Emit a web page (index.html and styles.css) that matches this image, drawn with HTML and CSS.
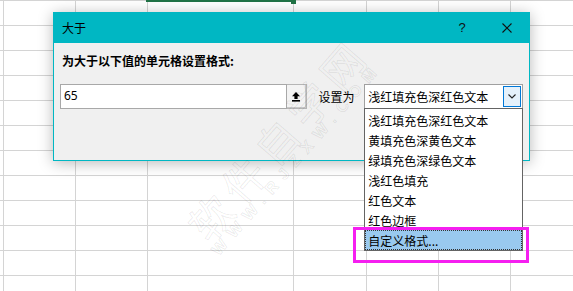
FILE: index.html
```html
<!DOCTYPE html>
<html lang="zh-CN">
<head>
<meta charset="utf-8">
<title>大于</title>
<link rel="stylesheet" href="styles.css">
</head>
<body>
<div class="sheet">
  <div class="col c0"></div>
  <div class="col c1"></div>
  <div class="col c2"></div>
  <div class="col c3"></div>
  <div class="col c4"></div>
  <div class="col c5"></div>
  <div class="col c6"></div>
  <div class="col c7"></div>
</div>
<div class="sel-edge"></div>
<div class="sel-handle"></div>

<div class="dialog">
  <div class="titlebar">
    <span class="title">大于</span>
    <span class="help">?</span>
    <svg class="close" width="10" height="10" viewBox="0 0 10 10"><path d="M0.5 0.5 L9.5 9.5 M9.5 0.5 L0.5 9.5" stroke="#111" stroke-width="1.1" fill="none"/></svg>
  </div>
  <div class="body">
    <div class="prompt">为大于以下值的单元格设置格式:</div>
    <div class="row">
      <div class="input">65</div>
      <div class="refbtn">
        <svg width="8" height="10" viewBox="0 0 8 10"><path d="M4 0 L8 4.2 L5.6 4.2 L5.6 7 L2.4 7 L2.4 4.2 L0 4.2 Z" fill="#000"/><rect x="0" y="8" width="8" height="1.6" fill="#000"/></svg>
      </div>
      <div class="setlabel">设置为</div>
      <div class="combo">
        <span class="combo-text">浅红填充色深红色文本</span>
        <span class="ddbtn"><svg width="8" height="5" viewBox="0 0 8 5"><path d="M0.5 0.5 L4 4 L7.5 0.5" stroke="#222" stroke-width="1.1" fill="none"/></svg></span>
        <ul class="list">
          <li>浅红填充色深红色文本</li>
          <li>黄填充色深黄色文本</li>
          <li>绿填充色深绿色文本</li>
          <li>浅红色填充</li>
          <li>红色文本</li>
          <li>红色边框</li>
          <li class="selected">自定义格式...</li>
        </ul>
      </div>
    </div>
  </div>
</div>

<div class="highlight"></div>
<div class="wm wm1">软件自学网</div>
<div class="wm wm2">WWW.RJZXW.COM</div>
</body>
</html>
```

FILE: styles.css
```css
* { box-sizing: border-box; }
html, body {
  margin: 0;
  padding: 0;
  width: 573px;
  height: 291px;
  overflow: hidden;
  background: #fff;
  font-family: "Noto Sans CJK SC", "Noto Sans", sans-serif;
  color: #000;
}
.sheet {
  display: flex;
  height: 291px;
  background: repeating-linear-gradient(to bottom, #d4d4d4 0 1px, transparent 1px 25px);
}
.col {
  flex: none;
  height: 100%;
  border-right: 1px solid #d4d4d4;
  box-sizing: content-box;
}
.c0 { width: 3px; }
.c1 { width: 71px; }
.c2 { width: 71px; }
.c3 { width: 145px; }
.c4 { width: 72px; }
.c5 { width: 71px; }
.c6 { width: 71px; }
.c7 { flex: 1; border-right: none; }

.sel-edge {
  position: absolute;
  left: 146px;
  top: 0;
  width: 145px;
  height: 2px;
  background: #217346;
}
.sel-handle {
  position: absolute;
  left: 291px;
  top: 0;
  width: 5px;
  height: 4px;
  background: #217346;
}

.dialog {
  position: absolute;
  left: 53px;
  top: 12px;
  width: 477px;
  height: 149px;
  background: #f0f0f0;
  border: 1px solid #00b7c3;
  box-shadow: 0 2px 14px rgba(0, 0, 0, 0.28);
  display: flex;
  flex-direction: column;
}
.titlebar {
  height: 30px;
  flex: none;
  background: #00b7c3;
  display: flex;
  align-items: center;
  padding-left: 8px;
  padding-right: 17px;
}
.title {
  font-size: 12px;
  line-height: 16px;
  color: #000;
}
.help {
  margin-left: auto;
  width: 12px;
  text-align: center;
  font-family: "Liberation Sans", sans-serif;
  font-size: 13px;
  line-height: 16px;
  color: #111;
}
.close {
  display: block;
  margin-left: 34px;
}
.body {
  flex: 1;
  padding: 10px 6px 0 6px;
}
.prompt {
  margin-left: 2px;
  font-size: 12px;
  font-weight: bold;
  line-height: 16px;
  height: 16px;
}
.row {
  margin-top: 15px;
  display: flex;
  align-items: center;
  height: 25px;
}
.input {
  width: 227px;
  height: 25px;
  background: #fff;
  border: 1px solid #a8a8a8;
  font-family: "Noto Sans", sans-serif;
  font-size: 12px;
  line-height: 22px;
  padding-left: 3px;
}
.refbtn {
  width: 21px;
  height: 25px;
  border: 1px solid #b5b5b5;
  border-left: none;
  box-shadow: inset -1px -1px 0 #c8c8c8;
  background: #f3f3f3;
  display: flex;
  align-items: center;
  justify-content: center;
}
.setlabel {
  margin-left: 11px;
  font-size: 12px;
  line-height: 16px;
  width: 46px;
}
.combo {
  position: relative;
  width: 159px;
  height: 25px;
  background: #fff;
  border: 1px solid #a0a0a0;
  display: flex;
  align-items: center;
  padding-left: 3px;
}
.combo-text {
  font-size: 12px;
  line-height: 16px;
  flex: 1;
}
.ddbtn {
  width: 18px;
  height: 21px;
  margin-right: 1px;
  background: #e5f1fb;
  border: 1px solid #0078d7;
  display: flex;
  align-items: center;
  justify-content: center;
}
.list {
  position: absolute;
  left: -1px;
  top: 23px;
  width: 159px;
  margin: 0;
  padding: 1px 0 0 0;
  list-style: none;
  background: #fff;
  border: 1px solid #646464;
  z-index: 5;
}
.list li {
  height: 20px;
  font-size: 12px;
  line-height: 16px;
  padding: 3px 0 0 3px;
  white-space: nowrap;
}
.list li.selected {
  background: #99c9ef;
  outline: 1px dotted #333;
  outline-offset: -1px;
}

.highlight {
  position: absolute;
  left: 353px;
  top: 227px;
  width: 176px;
  height: 36px;
  border: 3px solid #f51ff0;
  z-index: 6;
}

.wm {
  position: absolute;
  z-index: 7;
  pointer-events: none;
  white-space: nowrap;
  text-align: center;
  color: rgba(0, 0, 0, 0.02);
  -webkit-text-stroke: 1px rgba(0, 0, 0, 0.08);
  transform: rotate(-49deg);
}
.wm1 {
  left: 148px;
  top: 116px;
  width: 260px;
  font-size: 42px;
  line-height: 44px;
  letter-spacing: 8px;
}
.wm2 {
  left: 172px;
  top: 150px;
  width: 250px;
  font-family: "Liberation Sans", sans-serif;
  font-size: 16px;
  line-height: 18px;
  letter-spacing: 8px;
  font-weight: bold;
}
```
